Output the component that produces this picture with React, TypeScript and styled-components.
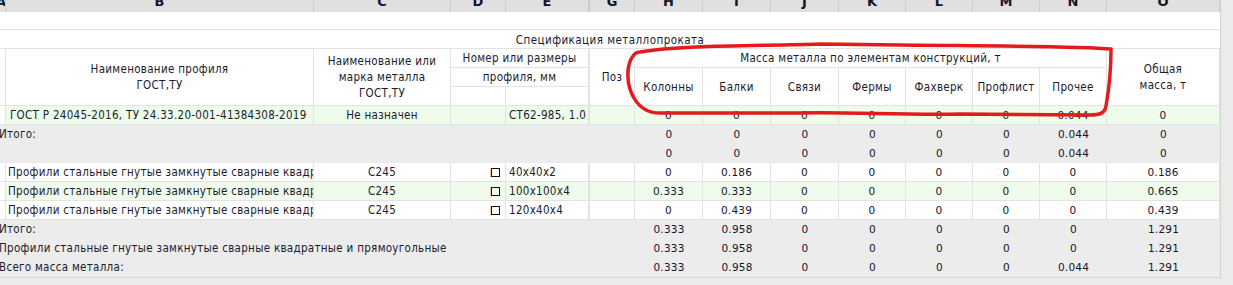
import React from "react";
import styled, { createGlobalStyle } from "styled-components";

const COLS = "6px 308px 137px 55px 84px 45px 68px 68px 68px 67px 67px 67px 67px 113px";
const LINE = "#e3e3e3";
const GOST_FONT = `"DejaVu Sans Condensed", "DejaVu Sans", sans-serif`;
const NUM_FONT = `"DejaVu Sans", "Noto Sans", sans-serif`;

const GlobalStyle = createGlobalStyle`
  html, body {
    margin: 0;
    padding: 0;
    background: #ebebeb;
  }
  body {
    font-family: ${GOST_FONT};
    color: #1b1b2e;
  }
`;

const Page = styled.div`
  position: relative;
  width: 1233px;
  height: 285px;
  overflow: hidden;
`;

const Sheet = styled.div`
  width: 1220px;
  background: #fff;
  border-right: 1px solid #d3d3d3;
  border-bottom: 1px solid #d3d3d3;
`;

const LetterBar = styled.div`
  display: grid;
  grid-template-columns: ${COLS};
  height: 12px;
  background: #e0e0e0;
  overflow: hidden;
`;

const Letter = styled.div<{ $thick?: boolean; $shift?: number }>`
  box-sizing: border-box;
  border-right: ${({ $thick }) => ($thick ? 2 : 1)}px solid #cdcdcd;
  font-family: ${NUM_FONT};
  font-weight: bold;
  font-size: 13px;
  line-height: 12px;
  text-align: center;
  color: #15152a;
  overflow: hidden;
  white-space: nowrap;

  span {
    display: inline-block;
    transform: translate(${({ $shift }) => $shift ?? 0}px, -4px);
  }
`;

const BlankRow = styled.div<{ $h: number }>`
  box-sizing: border-box;
  height: ${({ $h }) => $h}px;
  border-bottom: 1px solid ${LINE};
`;

const TitleRow = styled.div`
  box-sizing: border-box;
  height: 19px;
  border-bottom: 1px solid ${LINE};
  padding-left: 0;
  text-align: center;
  font-size: 11.5px;
  line-height: 20px;
  letter-spacing: 0.45px;
`;

const HeaderBlock = styled.div`
  display: grid;
  grid-template-columns: ${COLS};
  grid-template-rows: repeat(3, 19px);
`;

const HCell = styled.div<{ $col: string; $row: string; $thick?: boolean }>`
  grid-column: ${({ $col }) => $col};
  grid-row: ${({ $row }) => $row};
  box-sizing: border-box;
  display: flex;
  align-items: center;
  justify-content: center;
  text-align: center;
  border-right: ${({ $thick }) => ($thick ? 2 : 1)}px solid ${LINE};
  border-bottom: 1px solid ${LINE};
  font-size: 11.5px;
  line-height: 16px;
  letter-spacing: 0.3px;
  white-space: nowrap;
  overflow: hidden;
`;

type Tone = "white" | "green" | "gray";

const toneBg: Record<Tone, string> = {
  white: "#ffffff",
  green: "#effbeb",
  gray: "#ececec",
};

const DataRow = styled.div<{ $tone: Tone }>`
  display: grid;
  grid-template-columns: ${COLS};
  box-sizing: border-box;
  height: 19px;
  background: ${({ $tone }) => toneBg[$tone]};
  border-bottom: 1px solid ${({ $tone }) => ($tone === "gray" ? "transparent" : LINE)};
`;

const Cell = styled.div<{
  $align?: "left" | "center" | "right";
  $lined?: boolean;
  $thick?: boolean;
  $pad?: number;
  $bg?: string;
  $span?: number;
}>`
  box-sizing: border-box;
  grid-column: span ${({ $span }) => $span ?? 1};
  display: flex;
  align-items: center;
  justify-content: ${({ $align }) =>
    $align === "left" ? "flex-start" : $align === "right" ? "flex-end" : "center"};
  padding: 0 ${({ $pad }) => $pad ?? 0}px;
  border-right: ${({ $lined, $thick }) =>
    $lined ? `${$thick ? 2 : 1}px solid ${LINE}` : "none"};
  background: ${({ $bg }) => $bg ?? "transparent"};
  font-size: 11.5px;
  letter-spacing: 0.3px;
  white-space: nowrap;
  overflow: hidden;
`;

const Num = styled.span`
  font-family: ${NUM_FONT};
  font-size: 10.5px;
  letter-spacing: 0.2px;
  color: #15152a;
`;

const Label = styled.span<{ $indent?: number }>`
  margin-left: ${({ $indent }) => $indent ?? 0}px;
`;

const ProfileMark = styled.span`
  display: inline-block;
  box-sizing: border-box;
  width: 9px;
  height: 9px;
  border: 1.5px solid #111;
  box-shadow: -1px 0 0 rgba(230, 140, 40, 0.45);
`;

const Annotation = styled.svg`
  position: absolute;
  left: 0;
  top: 0;
  pointer-events: none;
`;

const letters = [
  { l: "A", shift: -4 },
  { l: "B" },
  { l: "C" },
  { l: "D" },
  { l: "E", thick: true },
  { l: "G" },
  { l: "H" },
  { l: "I" },
  { l: "J" },
  { l: "K" },
  { l: "L" },
  { l: "M" },
  { l: "N" },
  { l: "O" },
];

const parts = ["Колонны", "Балки", "Связи", "Фермы", "Фахверк", "Профлист", "Прочее"];

const SHAPE = "Профили стальные гнутые замкнутые сварные квадратные и прямоугольные";

const profiles = [
  { size: "40x40x2", tone: "white" as Tone, values: ["0", "0.186", "0", "0", "0", "0", "0", "0.186"] },
  { size: "100x100x4", tone: "green" as Tone, values: ["0.333", "0.333", "0", "0", "0", "0", "0", "0.665"] },
  { size: "120x40x4", tone: "white" as Tone, values: ["0", "0.439", "0", "0", "0", "0", "0", "0.439"] },
];

const totals = [
  { label: "Итого:", values: ["0.333", "0.958", "0", "0", "0", "0", "0", "1.291"] },
  { label: SHAPE, values: ["0.333", "0.958", "0", "0", "0", "0", "0", "1.291"] },
  { label: "Всего масса металла:", values: ["0.333", "0.958", "0", "0", "0", "0", "0.044", "1.291"] },
];

const Values: React.FC<{ values: string[]; lined?: boolean }> = ({ values, lined }) => (
  <>
    {values.map((v, i) => (
      <Cell key={i} $lined={lined}>
        <Num>{v}</Num>
      </Cell>
    ))}
  </>
);

const SummaryRow: React.FC<{ label?: string; values: string[] }> = ({ label, values }) => (
  <DataRow $tone="gray">
    <Cell $span={6} $align="left">
      {label && <Label $indent={-1}>{label}</Label>}
    </Cell>
    <Values values={values} />
  </DataRow>
);

const App: React.FC = () => {
  return (
    <Page>
      <GlobalStyle />
      <Sheet>
        <LetterBar>
          {letters.map((c) => (
            <Letter key={c.l} $thick={c.thick} $shift={c.shift}>
              <span>{c.l}</span>
            </Letter>
          ))}
        </LetterBar>

        <BlankRow $h={18} />
        <TitleRow>Спецификация металлопроката</TitleRow>

        <HeaderBlock>
          <HCell $col="1" $row="1 / 4" />
          <HCell $col="2" $row="1 / 4">
            Наименование профиля
            <br />
            ГОСТ,ТУ
          </HCell>
          <HCell $col="3" $row="1 / 4">
            Наименование или
            <br />
            марка металла
            <br />
            ГОСТ,ТУ
          </HCell>
          <HCell $col="4 / 6" $row="1" $thick>
            Номер или размеры
          </HCell>
          <HCell $col="4 / 6" $row="2" $thick>
            профиля, мм
          </HCell>
          <HCell $col="4" $row="3" />
          <HCell $col="5" $row="3" $thick />
          <HCell $col="6" $row="1 / 4">
            Поз
          </HCell>
          <HCell $col="7 / 14" $row="1">
            Масса металла по элементам конструкций, т
          </HCell>
          {parts.map((p, i) => (
            <HCell key={p} $col={String(7 + i)} $row="2 / 4">
              {p}
            </HCell>
          ))}
          <HCell $col="14" $row="1 / 4">
            Общая
            <br />
            масса, т
          </HCell>
        </HeaderBlock>

        <DataRow $tone="green">
          <Cell $lined $bg="#fff" />
          <Cell $lined $align="left" $pad={4}>
            ГОСТ Р 24045-2016, ТУ 24.33.20-001-41384308-2019
          </Cell>
          <Cell $lined>Не назначен</Cell>
          <Cell $lined />
          <Cell $lined $thick $align="left" $pad={3}>
            СТ62-985, 1.0
          </Cell>
          <Cell $lined />
          <Values lined values={["0", "0", "0", "0", "0", "0", "0.044", "0"]} />
        </DataRow>

        <SummaryRow label="Итого:" values={["0", "0", "0", "0", "0", "0", "0.044", "0"]} />
        <SummaryRow values={["0", "0", "0", "0", "0", "0", "0.044", "0"]} />

        {profiles.map((p) => (
          <DataRow key={p.size} $tone={p.tone}>
            <Cell $lined $bg="#fff" />
            <Cell $lined $align="left" $pad={2}>
              {SHAPE}
            </Cell>
            <Cell $lined>С245</Cell>
            <Cell $lined $align="right" $pad={5}>
              <ProfileMark />
            </Cell>
            <Cell $lined $thick $align="left" $pad={3}>
              {p.size}
            </Cell>
            <Cell $lined />
            <Values lined values={p.values} />
          </DataRow>
        ))}

        {totals.map((t) => (
          <SummaryRow key={t.label} label={t.label} values={t.values} />
        ))}
      </Sheet>

      <Annotation width="1233" height="285" viewBox="0 0 1233 285">
        <path
          d="M 640 52 C 680 45, 760 46, 820 44 L 900 45 C 1000 46, 1080 46, 1111 49 C 1111 70, 1108 95, 1106 106 C 1105 113, 1100 115, 1090 115 L 960 114 C 900 115, 850 112, 800 113 L 660 113 C 645 113, 638 105, 634 98 C 626 85, 626 65, 633 56 C 635 53, 637 52, 640 52 Z"
          fill="none"
          stroke="#e31b1d"
          strokeWidth="3.5"
          strokeLinejoin="round"
        />
      </Annotation>
    </Page>
  );
};

export default App;
